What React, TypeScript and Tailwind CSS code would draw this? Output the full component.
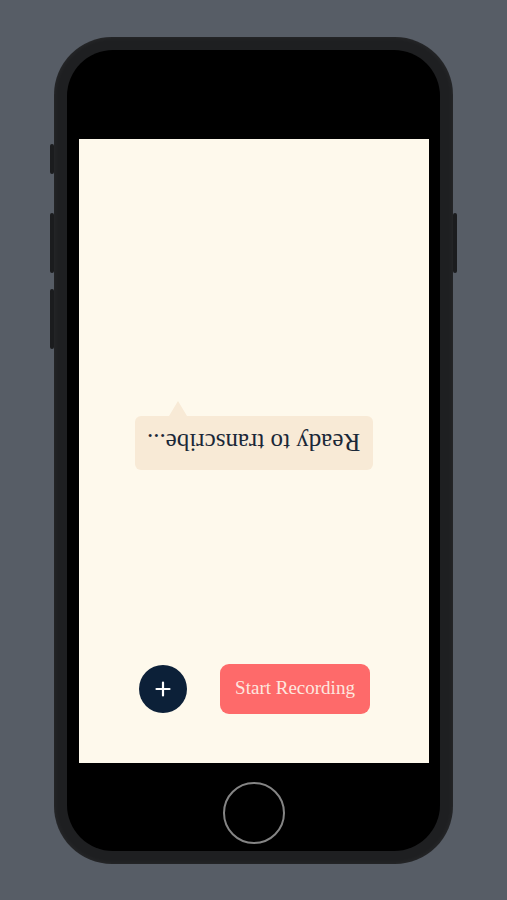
import React from 'react';

const serif = { fontFamily: '"Liberation Serif", "DejaVu Serif", serif' };

function SideButton({ side, top, height }: { side: 'left' | 'right'; top: string; height: string }) {
  return (
    <div
      className={`absolute w-[4px] rounded-[2px] bg-[#1b1c1e] ${side === 'left' ? 'left-[-4px]' : 'right-[-4px]'} ${top} ${height}`}
    />
  );
}

export default function App() {
  return (
    <div className="w-full h-[900px] bg-[#575d66] flex items-center justify-center">
      {/* phone body */}
      <div className="relative w-[399px] h-[827px] rounded-[58px] bg-[#1e1f21] p-[13px] shadow-[inset_0_0_6px_rgba(255,255,255,0.06)]">
        <SideButton side="left" top="top-[107px]" height="h-[30px]" />
        <SideButton side="left" top="top-[176px]" height="h-[60px]" />
        <SideButton side="left" top="top-[252px]" height="h-[60px]" />
        <SideButton side="right" top="top-[176px]" height="h-[60px]" />

        <div className="w-full h-full rounded-[46px] bg-black flex flex-col pt-[89px] pl-[12px] pr-[11px]">
          {/* screen */}
          <div className="h-[624px] bg-[#fef9ec] flex flex-col items-center pt-[262px]">
            <div className="flex flex-col w-[238px]">
              <svg width="18" height="15" viewBox="0 0 18 15" className="ml-[34px] block">
                <polygon points="9,0 18,15 0,15" fill="#f8ead6" />
              </svg>
              <div className="h-[54px] rounded-[6px] bg-[#f8ead6] flex items-center justify-center">
                <span className="rotate-180 text-[25px] text-[#1b2838] leading-none" style={serif}>
                  Ready to transcribe...
                </span>
              </div>
            </div>

            <div className="mt-[194px] flex items-center gap-[33px] pl-[1px]">
              <button className="w-[48px] h-[48px] rounded-full bg-[#0c2038] flex items-center justify-center">
                <svg width="16" height="16" viewBox="0 0 16 16">
                  <path d="M8 1.5v13M1.5 8h13" stroke="#ffffff" strokeWidth="2.2" strokeLinecap="round" />
                </svg>
              </button>
              <button
                className="w-[150px] h-[50px] rounded-[9px] bg-[#fe6a6a] text-[#fde6df] text-[19px] flex items-center justify-center"
                style={serif}
              >
                Start Recording
              </button>
            </div>
          </div>

          {/* home button */}
          <div className="flex justify-center pt-[19px]">
            <div className="w-[62px] h-[62px] rounded-full border-2 border-[#858585]" />
          </div>
        </div>
      </div>
    </div>
  );
}
